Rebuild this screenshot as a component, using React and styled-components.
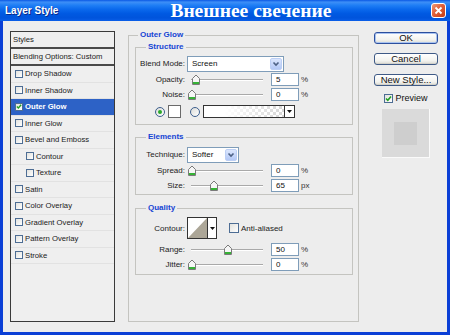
import React from "react";
import styled, { createGlobalStyle } from "styled-components";

const GlobalStyle = createGlobalStyle`
  html, body {
    margin: 0;
    padding: 0;
    background: #ededed;
  }
  body {
    font-family: "Liberation Sans", Arial, sans-serif;
  }
`;

const Window = styled.div`
  width: 450px;
  height: 335px;
  display: flex;
  flex-direction: column;
  overflow: hidden;
`;

const TitleBar = styled.div`
  flex: none;
  height: 21px;
  display: flex;
  align-items: center;
  padding: 0 4px 0 5px;
  color: #fff;
  background: linear-gradient(
    to bottom,
    #0a58e4 0%,
    #3d8ff7 10%,
    #1f7ef5 25%,
    #0a68ec 45%,
    #0059e2 65%,
    #0054dc 85%,
    #0a5ee8 100%
  );
`;

const Caption = styled.span`
  font: bold 10px "Liberation Sans", Arial, sans-serif;
  text-shadow: 1px 1px 0 #0a2a8a;
  white-space: nowrap;
`;

const BigTitle = styled.span`
  margin-left: 112px;
  font: bold 19.5px "Liberation Serif", "Times New Roman", serif;
  line-height: 19px;
  white-space: nowrap;
`;

const CloseButton = styled.div`
  margin-left: auto;
  width: 15px;
  height: 15px;
  box-sizing: border-box;
  border: 1px solid #fff;
  border-radius: 3px;
  background: linear-gradient(135deg, #ee9a78 0%, #e0603a 45%, #c43c14 100%);
  display: flex;
  align-items: center;
  justify-content: center;
`;

const Frame = styled.div`
  flex: 1;
  display: flex;
  align-items: flex-start;
  padding: 9px 0 0 7px;
  background: #ededed;
  border: 3px solid #0b3fd6;
  border-top: none;
`;

/* left list of effects */
const StylesList = styled.div`
  flex: none;
  width: 105px;
  height: 291px;
  margin-top: 1px;
  box-sizing: border-box;
  border: 1px solid #3a3a3a;
  background: #efefef;
  display: flex;
  flex-direction: column;
`;

const ListRow = styled.div`
  box-sizing: border-box;
  height: ${(p) => (p.$header ? "17px" : "16.5px")};
  display: flex;
  align-items: center;
  gap: 2px;
  padding-left: ${(p) => (p.$header ? 2 : p.$indent ? 15 : 4)}px;
  border-bottom: ${(p) => (p.$header ? "2px solid #4a4a4a" : "1px solid #e2e2e2")};
  background: ${(p) => (p.$selected ? "#2d62c6" : "transparent")};
  color: ${(p) => (p.$selected ? "#fff" : "#1a1a1a")};
  font-size: 7.7px;
  font-weight: ${(p) => (p.$selected ? "bold" : "normal")};
  white-space: nowrap;
`;

const CheckBox = styled.span`
  flex: none;
  box-sizing: border-box;
  width: ${(p) => p.$size}px;
  height: ${(p) => p.$size}px;
  border: 1px solid #4d6d94;
  background: linear-gradient(135deg, #e2e2de, #ffffff);
  display: inline-flex;
  align-items: center;
  justify-content: center;
`;

/* group boxes */
const OuterGroup = styled.fieldset`
  flex: none;
  margin: 0 0 0 13px;
  min-width: 0;
  width: 231px;
  height: 292px;
  box-sizing: border-box;
  padding: 2px 5px 0 6px;
  border: 1px solid #c4c4c0;
`;

const SubGroup = styled.fieldset`
  margin: ${(p) => p.$top || 0}px 0 0 0;
  min-width: 0;
  padding: ${(p) => p.$padTop}px 0 ${(p) => p.$padBottom}px 4px;
  border: 1px solid #c4c4c0;
`;

const Legend = styled.legend`
  margin-left: ${(p) => p.$indent}px;
  padding: 0 2px;
  font: bold 8px/10px "Liberation Sans", Arial, sans-serif;
  color: #1544d4;
`;

const Row = styled.div`
  display: flex;
  align-items: center;
  height: ${(p) => p.$h || 13}px;
  margin-top: ${(p) => (p.$gap === undefined ? 2 : p.$gap)}px;
  font-size: 8px;
  color: #222;
`;

const Label = styled.span`
  flex: none;
  width: 45px;
  margin-right: 2px;
  text-align: right;
  white-space: nowrap;
`;

const SliderBox = styled.div`
  position: relative;
  flex: none;
  width: 80px;
  height: 13px;
  display: flex;
  align-items: center;
`;

const Track = styled.div`
  flex: 1;
  margin: 0 4px;
  height: 0;
  border-top: 1px solid #a9a9a9;
  border-bottom: 1px solid #ffffff;
`;

const ThumbSvg = styled.svg`
  position: absolute;
  top: 1px;
`;

const NumBox = styled.div`
  flex: none;
  box-sizing: border-box;
  width: 28px;
  height: 13px;
  margin-left: 4px;
  padding-left: 4px;
  border: 1px solid #7f9db9;
  background: #fff;
  line-height: 11px;
  color: #111;
`;

const Unit = styled.span`
  margin-left: 2px;
  color: #333;
`;

const Combo = styled.div`
  flex: none;
  box-sizing: border-box;
  width: ${(p) => p.$w}px;
  height: 16px;
  padding-left: 4px;
  border: 1px solid #7f9db9;
  background: #fff;
  display: flex;
  align-items: center;
  color: #111;
`;

const ComboArrow = styled.span`
  margin-left: auto;
  margin-right: 1px;
  width: 12px;
  height: 12px;
  box-sizing: border-box;
  border: 1px solid #bccff5;
  border-radius: 2px;
  background: linear-gradient(#dbe6fd, #b3c8f6);
  display: flex;
  align-items: center;
  justify-content: center;
`;

const RadioRow = styled.div`
  display: flex;
  align-items: center;
  height: 13px;
  margin-top: 4px;
  padding-left: 15px;
`;

const Radio = styled.span`
  flex: none;
  box-sizing: border-box;
  width: 10px;
  height: 10px;
  margin-left: ${(p) => p.$ml || 0}px;
  border-radius: 50%;
  border: 1px solid #3d5f8e;
  background: linear-gradient(135deg, #dcdcd8, #ffffff);
  display: flex;
  align-items: center;
  justify-content: center;

  &::after {
    content: "";
    display: ${(p) => (p.$on ? "block" : "none")};
    width: 4px;
    height: 4px;
    border-radius: 50%;
    background: #2aa82a;
  }
`;

const Swatch = styled.span`
  flex: none;
  box-sizing: border-box;
  width: 13px;
  height: 13px;
  margin-left: 3px;
  border: 1px solid #6a6a6a;
  background: #fff;
`;

const GradientBox = styled.div`
  flex: none;
  box-sizing: border-box;
  width: 92px;
  height: 13px;
  margin-left: 3px;
  border: 1px solid #333;
  display: flex;
`;

const GradientFill = styled.div`
  flex: 1;
  background:
    linear-gradient(to right, #ffffff 25%, rgba(255, 255, 255, 0) 100%),
    repeating-conic-gradient(#d6d6d6 0% 25%, #ffffff 0% 50%) 0 0 / 6px 6px;
`;

const DropPart = styled.div`
  flex: none;
  width: ${(p) => p.$w}px;
  border-left: 1px solid #333;
  background: #fff;
  display: flex;
  align-items: center;
  justify-content: center;
`;

const ContourBox = styled.div`
  flex: none;
  box-sizing: border-box;
  width: 30px;
  height: 22px;
  border: 1px solid #333;
  display: flex;
`;

const ContourGraph = styled.svg`
  flex: 1;
  height: 100%;
  display: block;
`;

const CheckLabel = styled.span`
  margin-left: 2px;
`;

/* right column */
const SideColumn = styled.div`
  flex: none;
  width: 64px;
  margin: 2px 0 0 15px;
  display: flex;
  flex-direction: column;
  align-items: center;
`;

const Button = styled.div`
  box-sizing: border-box;
  width: 64px;
  height: 12px;
  margin-top: ${(p) => (p.$first ? 0 : 9)}px;
  border: 1px solid ${(p) => (p.$default ? "#2c4f9e" : "#3f5a86")};
  border-radius: 3px;
  background: linear-gradient(#ffffff, #f3f3ef 65%, #dcdcd5);
  box-shadow: ${(p) => (p.$default ? "inset 0 0 0 1px #a9c3f0" : "inset 0 -1px 0 #d2d1ca")};
  font-size: 9.5px;
  line-height: 10px;
  text-align: center;
  color: #111;
  white-space: nowrap;
`;

const PreviewToggle = styled.div`
  margin-top: 7px;
  display: flex;
  align-items: center;
  gap: 2px;
  font-size: 9px;
  color: #111;
`;

const PreviewBox = styled.div`
  margin-top: 6px;
  width: 48px;
  height: 49px;
  box-sizing: border-box;
  background: #dadada;
  border-right: 1px solid #fafafa;
  border-bottom: 1px solid #fafafa;
  display: flex;
  align-items: center;
  justify-content: center;
`;

const PreviewInner = styled.div`
  width: 23px;
  height: 23px;
  background: #cecece;
`;

const Tick = () => (
  <svg width="7" height="7" viewBox="0 0 7 7">
    <polyline points="1,3.5 2.8,5.3 6,1.5" fill="none" stroke="#21a121" strokeWidth="1.6" />
  </svg>
);

const Chevron = () => (
  <svg width="8" height="6" viewBox="0 0 8 6">
    <polyline points="1.5,1.5 4,4 6.5,1.5" fill="none" stroke="#4d6185" strokeWidth="1.6" />
  </svg>
);

const DownTriangle = () => (
  <svg width="5" height="3" viewBox="0 0 5 3">
    <polygon points="0,0 5,0 2.5,3" fill="#111" />
  </svg>
);

function Slider({ pct }) {
  return (
    <SliderBox>
      <Track />
      <ThumbSvg width="8" height="11" viewBox="0 0 8 11" style={{ left: 1 + 72 * pct }}>
        <path d="M0.5 10.5V4.5L4 1L7.5 4.5V10.5Z" fill="#f6f6f6" stroke="#7a7a7a" />
        <rect x="1" y="8" width="6" height="2" fill="#36b236" />
      </ThumbSvg>
    </SliderBox>
  );
}

function SliderRow({ label, value, pct, unit = "%", gap }) {
  return (
    <Row $gap={gap}>
      <Label>{label}</Label>
      <Slider pct={pct} />
      <NumBox>{value}</NumBox>
      <Unit>{unit}</Unit>
    </Row>
  );
}

const effects = [
  { name: "Drop Shadow" },
  { name: "Inner Shadow" },
  { name: "Outer Glow", on: true },
  { name: "Inner Glow" },
  { name: "Bevel and Emboss" },
  { name: "Contour", indent: true },
  { name: "Texture", indent: true },
  { name: "Satin" },
  { name: "Color Overlay" },
  { name: "Gradient Overlay" },
  { name: "Pattern Overlay" },
  { name: "Stroke" },
];

export default function App() {
  return (
    <Window>
      <GlobalStyle />
      <TitleBar>
        <Caption>Layer Style</Caption>
        <BigTitle>Внешнее свечение</BigTitle>
        <CloseButton>
          <svg width="9" height="9" viewBox="0 0 9 9">
            <path d="M1.5 1.5L7.5 7.5M7.5 1.5L1.5 7.5" stroke="#fff" strokeWidth="1.8" />
          </svg>
        </CloseButton>
      </TitleBar>

      <Frame>
        <StylesList>
          <ListRow $header>Styles</ListRow>
          <ListRow $header>Blending Options: Custom</ListRow>
          {effects.map((e) => (
            <ListRow key={e.name} $selected={e.on} $indent={e.indent}>
              <CheckBox $size={8}>{e.on && <Tick />}</CheckBox>
              {e.name}
            </ListRow>
          ))}
        </StylesList>

        <OuterGroup>
          <Legend $indent={3}>Outer Glow</Legend>

          <SubGroup $padTop={4} $padBottom={6}>
            <Legend $indent={6}>Structure</Legend>
            <Row $h={15} $gap={0}>
              <Label>Blend Mode:</Label>
              <Combo $w={97}>
                Screen
                <ComboArrow>
                  <Chevron />
                </ComboArrow>
              </Combo>
            </Row>
            <SliderRow label="Opacity:" value="5" pct={0.05} />
            <SliderRow label="Noise:" value="0" pct={0} />
            <RadioRow>
              <Radio $on />
              <Swatch />
              <Radio $ml={9} />
              <GradientBox>
                <GradientFill />
                <DropPart $w={9}>
                  <DownTriangle />
                </DropPart>
              </GradientBox>
            </RadioRow>
          </SubGroup>

          <SubGroup $top={7} $padTop={5} $padBottom={2}>
            <Legend $indent={6}>Elements</Legend>
            <Row $h={15} $gap={0}>
              <Label>Technique:</Label>
              <Combo $w={52}>
                Softer
                <ComboArrow>
                  <Chevron />
                </ComboArrow>
              </Combo>
            </Row>
            <SliderRow label="Spread:" value="0" pct={0} />
            <SliderRow label="Size:" value="65" pct={0.3} unit="px" />
          </SubGroup>

          <SubGroup $top={8} $padTop={4} $padBottom={3}>
            <Legend $indent={6}>Quality</Legend>
            <Row $h={22} $gap={0}>
              <Label>Contour:</Label>
              <ContourBox>
                <ContourGraph viewBox="0 0 20 20" preserveAspectRatio="none">
                  <rect width="20" height="20" fill="#fff" />
                  <polygon points="0,20 20,0 20,20" fill="#aca697" />
                </ContourGraph>
                <DropPart $w={8}>
                  <DownTriangle />
                </DropPart>
              </ContourBox>
              <CheckBox $size={10} style={{ marginLeft: 12 }} />
              <CheckLabel>Anti-aliased</CheckLabel>
            </Row>
            <SliderRow label="Range:" value="50" pct={0.5} gap={4} />
            <SliderRow label="Jitter:" value="0" pct={0} />
          </SubGroup>
        </OuterGroup>

        <SideColumn>
          <Button $first $default>OK</Button>
          <Button>Cancel</Button>
          <Button>New Style...</Button>
          <PreviewToggle>
            <CheckBox $size={9}>
              <Tick />
            </CheckBox>
            Preview
          </PreviewToggle>
          <PreviewBox>
            <PreviewInner />
          </PreviewBox>
        </SideColumn>
      </Frame>
    </Window>
  );
}
